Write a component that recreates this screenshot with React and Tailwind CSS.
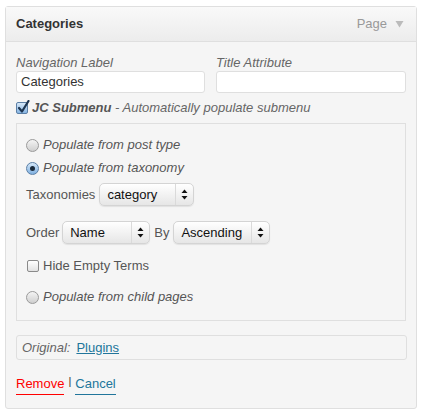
import React from 'react';

const Radio = ({ checked }) => (
  <span
    className={
      'flex h-[13px] w-[13px] shrink-0 items-center justify-center rounded-full border ' +
      (checked
        ? 'border-[#5b7fa6] bg-gradient-to-b from-[#d6e8f8] to-[#7fb0e0]'
        : 'border-[#9a9a9a] bg-gradient-to-b from-[#f4f4f4] to-[#cfcfcf]')
    }
  >
    {checked && <span className="h-[5px] w-[5px] rounded-full bg-[#1a2a3a]" />}
  </span>
);

const Checkbox = ({ checked }) => (
  <span
    className={
      'relative flex h-[12px] w-[12px] shrink-0 items-center justify-center rounded-[2px] border ' +
      (checked
        ? 'border-[#5b7fa6] bg-gradient-to-b from-[#d6e8f8] to-[#86b4e2]'
        : 'border-[#8a8a8a] bg-gradient-to-b from-[#ffffff] to-[#e2e2e2]')
    }
  >
    {checked && (
      <svg className="absolute -top-[3px] left-0" width="13" height="14" viewBox="0 0 13 14">
        <path d="M2 8 L5 11.5 L11.5 1" fill="none" stroke="#1d3550" strokeWidth="2.2" strokeLinecap="round" strokeLinejoin="round" />
      </svg>
    )}
  </span>
);

const Select = ({ value, width }) => (
  <div
    className="flex h-[23px] items-center rounded-[5px] border border-[#d4d4d4] bg-gradient-to-b from-[#ffffff] to-[#e6e6e6] shadow-[0_1px_1px_rgba(0,0,0,0.08)]"
    style={{ width }}
  >
    <span className="flex-1 pl-[7px] text-[13px] text-[#111]">{value}</span>
    <span className="flex h-full w-[18px] items-center justify-center border-l border-[#dadada]">
      <svg width="7" height="11" viewBox="0 0 7 11">
        <path d="M3.5 0.5 L6.5 4 L0.5 4 Z" fill="#111" />
        <path d="M3.5 10.5 L6.5 7 L0.5 7 Z" fill="#111" />
      </svg>
    </span>
  </div>
);

export default function App() {
  return (
    <div className="min-h-[416px] w-[426px] bg-white pl-[5px] pt-[6px]" style={{ fontFamily: '"Liberation Sans", Arial, sans-serif' }}>
      <div className="w-[412px] rounded-[3px] border border-[#dfdfdf] bg-[#f5f5f5]">
        <div className="flex h-[35px] items-center border-b border-[#dfdfdf] bg-gradient-to-b from-[#f9f9f9] to-[#ececec] pl-[10px] pr-[12px]">
          <span className="flex-1 text-[13px] font-bold text-[#333]">Categories</span>
          <span className="text-[13px] text-[#999]">Page</span>
          <svg className="ml-[8px]" width="9" height="8" viewBox="0 0 9 8">
            <path d="M0.5 1 L8.5 1 L4.5 7.5 Z" fill="#bbb" />
          </svg>
        </div>

        <div className="pl-[10px] pr-[9px] pt-[13px] pb-[13px]">
          <div className="flex gap-[11px]">
            <div className="w-[189px]">
              <div className="h-[16px] text-[13px] italic leading-[16px] text-[#666]">Navigation Label</div>
              <div className="flex h-[22px] items-center rounded-[3px] border border-[#dfdfdf] bg-white pl-[4px] text-[13px] text-[#333]">Categories</div>
            </div>
            <div className="w-[190px]">
              <div className="h-[16px] text-[13px] italic leading-[16px] text-[#666]">Title Attribute</div>
              <div className="h-[22px] rounded-[3px] border border-[#dfdfdf] bg-white" />
            </div>
          </div>

          <div className="mt-[7px] flex h-[16px] items-center gap-[4px] text-[13px] italic text-[#666]">
            <Checkbox checked />
            <span>
              <b className="text-[#555]">JC Submenu</b> - Automatically populate submenu
            </span>
          </div>

          <div className="mt-[7px] w-[390px] border border-[#dfdfdf] bg-[#f5f5f5] pl-[9px] pt-[12px] pb-[14px] text-[13px] text-[#555]">
            <div className="flex h-[18px] items-center gap-[4px] italic">
              <Radio />
              <span>Populate from post type</span>
            </div>
            <div className="mt-[5px] flex h-[18px] items-center gap-[4px] italic">
              <Radio checked />
              <span>Populate from taxonomy</span>
            </div>
            <div className="mt-[6px] flex items-center gap-[4px]">
              <span>Taxonomies</span>
              <Select value="category" width={95} />
            </div>
            <div className="mt-[15px] flex items-center">
              <span className="mr-[3px]">Order</span>
              <Select value="Name" width={88} />
              <span className="mx-[4px]">By</span>
              <Select value="Ascending" width={97} />
            </div>
            <div className="mt-[13px] flex h-[18px] items-center gap-[4px] pl-[1px]">
              <Checkbox />
              <span>Hide Empty Terms</span>
            </div>
            <div className="mt-[13px] flex h-[18px] items-center gap-[4px] italic">
              <Radio />
              <span>Populate from child pages</span>
            </div>
          </div>

          <div className="mt-[14px] flex h-[25px] w-[391px] items-center rounded-[3px] border border-[#dfdfdf] bg-[#f5f5f5] pl-[5px] text-[13px]">
            <span className="italic text-[#666]">Original:</span>
            <span className="ml-[6px] text-[#21759b] underline">Plugins</span>
          </div>

          <div className="mt-[16px] flex items-end text-[13px]">
            <span className="border-b border-[#f00] pb-[2px] leading-[16px] text-[#f00]">Remove</span>
            <span className="mx-[4px] mb-[8px] text-[11px] leading-[11px] text-[#333]">|</span>
            <span className="border-b border-[#21759b] pb-[2px] leading-[16px] text-[#21759b]">Cancel</span>
          </div>
        </div>
      </div>
    </div>
  );
}
